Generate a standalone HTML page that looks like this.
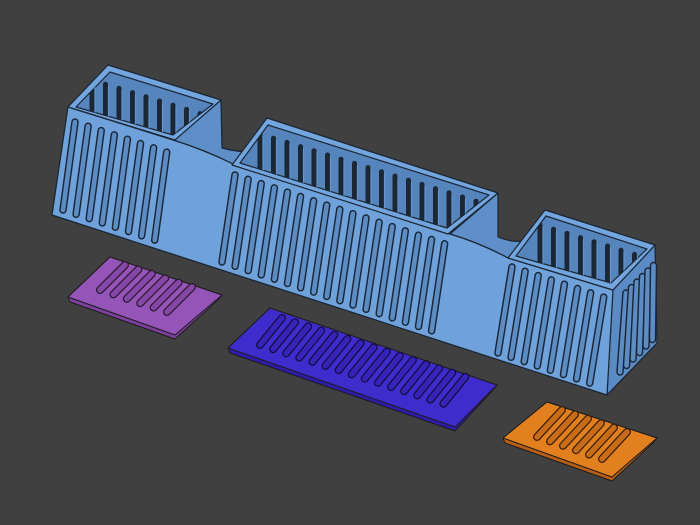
<!DOCTYPE html>
<html><head><meta charset="utf-8"><style>
html,body{margin:0;padding:0;background:#404040;}
svg{display:block}
</style></head><body>
<svg id="s" width="700" height="525" viewBox="0 0 700 525" xmlns="http://www.w3.org/2000/svg">
<rect width="700" height="525" fill="#404040"/>
<defs>
<clipPath id="c1"><polygon points="76,107 110,72 213,104 173,135"/></clipPath>
<clipPath id="c2"><polygon points="240,163 268,125 489,195 447,228"/></clipPath>
<clipPath id="c3"><polygon points="516,256 546,216 647,249 611,283"/></clipPath>
</defs>
<g stroke="#1c2735" stroke-width="1.2" stroke-linejoin="round">
<path d="M52,215 L68,107 L108,65 L221,100 L222,148 Q240,153 262,152 L267,118 L498,193 L498,237 Q515,244 530,240 L545,210 L655,245 L657,343 L607,395 Z" fill="#6b9dd6"/>
<path d="M173,140 L221,100 L222,148 Q240,153 262,152 L233,164 Q205,150 173,140 Z" fill="#5f8fc8"/>
<path d="M450,234 L498,193 L498,237 Q515,244 530,240 L508,258 Q480,243 450,234 Z" fill="#5f8fc8"/>
<path d="M613,290 L655,245 L657,343 L607,395 Z" fill="#5a8bc4"/>
<path d="M52,215 L68,107 L173,140 Q205,150 233,164 L450,234 Q480,243 508,258 L613,290 L607,395 Z" fill="#6fa1da"/>
<polygon points="68,107 108,65 221,100 175,140" fill="#73a5de"/>
<polygon points="232,165 267,118 498,193 448,234" fill="#73a5de"/>
<polygon points="508,258 545,210 655,245 613,290" fill="#73a5de"/>
<polygon points="76,107 110,72 213,104 173,135" fill="#5585bc"/>
<polygon points="240,163 268,125 489,195 447,228" fill="#5585bc"/>
<polygon points="516,256 546,216 647,249 611,283" fill="#5585bc"/>
</g>
<g id="inner"></g>
<g id="slots"></g>
<g stroke="#1c1c1c" stroke-width="1" stroke-linejoin="round">
<polygon points="68,297 110,257 222,295 218,300 175,339 70,302" fill="#7d3f9e"/>
<polygon points="68,297 110,257 222,295 175,335" fill="#9555b8"/>
<polygon points="228,348 270,308 497,385 493,390 455,431 230,353" fill="#2e1ca8"/>
<polygon points="228,348 270,308 497,385 455,427" fill="#3f2ccc"/>
<polygon points="503,438 547,402 657,438 653,443 612,481 505,443" fill="#b85e14"/>
<polygon points="503,438 547,402 657,438 612,477" fill="#e2801f"/>
</g>
<g id="ps"></g>
</svg>
<script>
var NS="http://www.w3.org/2000/svg";
function L(g,x1,y1,x2,y2,c,w,clip){var l=document.createElementNS(NS,"line");l.setAttribute("x1",x1);l.setAttribute("y1",y1);l.setAttribute("x2",x2);l.setAttribute("y2",y2);l.setAttribute("stroke",c);l.setAttribute("stroke-width",w);l.setAttribute("stroke-linecap","round");if(clip)l.setAttribute("clip-path",clip);g.appendChild(l);}
var S=document.getElementById("slots"),I=document.getElementById("inner"),P=document.getElementById("ps");
function slot(x1,y1,x2,y2){L(S,x1,y1,x2,y2,"#1c2735",7.5);L(S,x1,y1,x2,y2,"#5b8cc4",4.6);}
function row(n,tx,ty,bx,by,dx,dy){for(var i=0;i<n;i++)slot(tx+dx*i,ty+dy*i,bx+dx*i,by+dy*i);}
row(8,75,122,63,210,13.1,4.3);
row(17,235,175,222,262,13.1,4.3);
row(8,512,267,498,353,13.1,4.3);
for(var i=0;i<6;i++)slot(626+5.5*i,293-5.5*i,620+6.5*i,372-6.5*i);
function inner(n,x0,y0,dx,dy,h,clip){var g=document.createElementNS(NS,"g");g.setAttribute("clip-path",clip);I.appendChild(g);for(var i=0;i<n;i++){L(g,x0+dx*i,y0+dy*i,x0+dx*i,y0+dy*i+h,"#1c2735",5);L(g,x0+dx*i+3,y0+dy*i+2,x0+dx*i+3,y0+dy*i+h,"#6595cc",1.2);}}
inner(9,92,80,13.5,4.2,50,"url(#c1)");
inner(18,260,134,13.5,4.2,55,"url(#c2)");
inner(9,540,225,13.5,4.2,45,"url(#c3)");
function pslot(n,tx,ty,bx,by,dx,dy,c1,c2){for(var i=0;i<n;i++){L(P,tx+dx*i,ty+dy*i,bx+dx*i,by+dy*i,c1,8);L(P,tx+dx*i,ty+dy*i,bx+dx*i,by+dy*i,c2,5.5);}}
pslot(6,125,265,100,290,13.4,4.4,"#2a1a30","#8547a8");
pslot(15,282,318,260,345,13.1,4.2,"#140c40","#3624b8");
pslot(6,562,410,537,437,13,4.4,"#3a2008","#c96c18");
</script>
</body></html>
